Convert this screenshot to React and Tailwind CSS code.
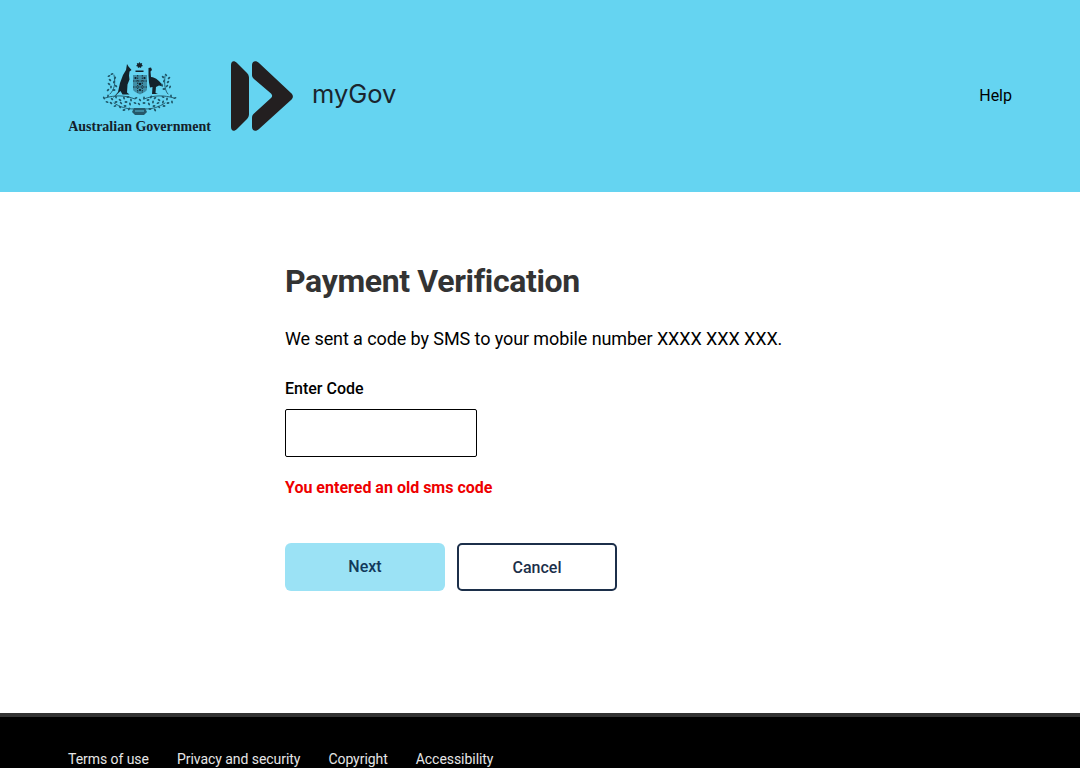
import React from 'react';

// leaves of the wattle, x/y in the crest's own coordinates
const leaves = [
  [7, 15], [10, 13], [13, 17], [8, 19], [12, 21], [7, 23], [14, 25], [9, 26], [12, 29], [6, 29],
  [61, 16], [64, 14], [67, 17], [62, 20], [66, 21], [60, 24], [65, 25], [68, 26], [62, 28],
  [2, 37], [6, 35], [10, 38], [14, 36], [18, 39], [22, 37], [26, 36], [5, 41], [9, 42], [14, 41], [19, 42], [24, 41], [29, 39], [13, 45], [18, 46], [23, 45], [28, 43], [22, 49], [27, 48],
  [73, 37], [69, 35], [65, 38], [61, 36], [57, 39], [53, 37], [49, 36], [70, 41], [66, 42], [61, 41], [56, 42], [51, 41], [46, 39], [62, 45], [57, 46], [52, 45], [47, 43], [53, 49], [48, 48],
  [34, 37], [38, 39], [42, 37], [33, 42], [37, 43], [42, 42],
];

const Crest = () => (
  <svg width="75" height="55" viewBox="0 0 75 55" className="block">
    {/* star */}
    <path d="M37.500 1l1 1.500 1.700-.4-.4 1.700 1.200 1.100-1.700.5-.3 1.700-1.500-.9-1.500.9-.3-1.700-1.700-.5 1.200-1.100-.4-1.700 1.700.4z" fill="#14222b" />
    <path d="M33.500 9.500h8V11h-8z" fill="#14222b" />
    {/* shield */}
    <path d="M31 14h14v14c0 2.500-3.500 3.500-7 5.500-3.500-2-7-3-7-5.500z" fill="#3f8ea6" />
    <path d="M35.700 14v18M40.300 14v18M31 20h14M31 26h14" stroke="#14222b" strokeWidth=".9" strokeDasharray="1.500 1" />
    <circle cx="33.500" cy="17" r="1.100" fill="#0f1d26" />
    <circle cx="38" cy="23" r="1.300" fill="#0f1d26" />
    <circle cx="42.500" cy="17" r="1.100" fill="#0f1d26" />
    <circle cx="38" cy="29" r="1.100" fill="#0f1d26" />
    {/* kangaroo */}
    <path d="M25 3l1.500 2.500L29.500 9l-2 1.500-.5 4 .5 4-2 5-.5 8 2.500 2h-7l-2-3.500L10 38l6-7 2-9 3-8 3-5z" fill="#14222b" />
    {/* emu */}
    <path d="M46.500 7l2.500-.5 1 2.500-1.500 1.500.5 5.500c5 .5 9 4 12 9.500l-4-1-3 1.500-.5 6 2.500 1H50l.5-7-2.500.5-1-5-.5-7z" fill="#14222b" />
    {/* wattle */}
    <g fill="none" stroke="#1e5567" strokeWidth=".9" strokeLinecap="round">
      <path d="M8 33c4-4 6-10 4-19M66 33c-3-3-4-10-3-18M3 37c10-3 20-3 30 1M72 37c-10-3-20-3-30 1M12 42c6 4 12 6 20 6M63 42c-6 4-12 6-20 6" />
    </g>
    <g fill="#1e5567">
      {leaves.map(([x, y]) => (
        <ellipse key={`${x}-${y}`} cx={x} cy={y} rx="1.500" ry=".9" transform={`rotate(${(x * 37 + y * 53) % 180} ${x} ${y})`} />
      ))}
    </g>
    {/* motto */}
    <path d="M32 47h11l2 4-3 3H33l-3-3z" fill="#25586a" />
    <path d="M33 50h9" stroke="#65d4f1" strokeWidth=".8" />
  </svg>
);

const MyGovMark = () => (
  <svg width="63" height="71" viewBox="0 0 63 71" className="block">
    <path d="M0 4C0 0 3-1 6 2l10 10c1.500 2 2 3 2 5v36c0 2-.5 3-2 5L6 68c-3 3-6 2-6-2z" fill="#231f20" />
    <path d="M21 4c0-4 4-5 7-2l32 30c2.500 2 2.500 5 0 7L28 68c-3 3-7 2-7-2v-9c0-2 .5-3 2-4.500L40 37c1.500-1.500 1.500-3 0-4.500L23 18c-1.500-1.500-2-2.500-2-4z" fill="#231f20" />
  </svg>
);

export default function App() {
  return (
    <div className="h-screen overflow-hidden bg-white font-['Roboto',sans-serif] flex flex-col">
      {/* Header */}
      <header className="h-[192px] shrink-0 bg-[#65d4f1] pl-[68px] pr-[68px] pt-[61px] flex justify-between items-start">
        <div className="flex items-start">
          <div className="w-[143px] flex flex-col items-center">
            <Crest />
            <span className="mt-[4px] whitespace-nowrap text-[14px] leading-[14px] font-bold text-[#14222b] font-['Liberation_Serif',serif]">
              Australian Government
            </span>
          </div>
          <div className="ml-[20px]"><MyGovMark /></div>
          <span className="ml-[18px] mt-[15px] text-[25.500px] leading-[36px] text-[#1a252e] font-['Inter',sans-serif]">myGov</span>
        </div>
        <a className="mt-[23px] text-base leading-[24px] text-black">Help</a>
      </header>

      {/* Main */}
      <main className="h-[521px] shrink-0 pl-[285px] pt-[68px]">
        <h1 className="text-[32px] leading-[42px] font-bold text-[#333333] tracking-[-0.35px]">Payment Verification</h1>
        <p className="mt-[23px] text-[18px] leading-[28px] text-black tracking-[-0.09px]">We sent a code by SMS to your mobile number XXXX XXX XXX.</p>
        <label className="block mt-[24px] text-base leading-[24px] font-medium text-black">Enter Code</label>
        <input className="block mt-[8px] w-[192px] h-[48px] rounded-[2px] border border-black bg-white" />
        <p className="mt-[19px] text-base leading-[24px] font-bold text-[#ee0000]">You entered an old sms code</p>
        <div className="mt-[43px] flex gap-3">
          <button className="w-[160px] h-[48px] rounded-[6px] bg-[#9be2f5] text-base font-medium text-[#12395a] pb-px">Next</button>
          <button className="w-[160px] h-[48px] rounded-[5px] border-2 border-[#1c2f4a] bg-white text-base font-medium text-[#1c2f4a] pt-px">Cancel</button>
        </div>
      </main>

      {/* Footer */}
      <footer className="flex-1 bg-black border-t-4 border-[#333333] pl-[68px] pt-[31px]">
        <ul className="flex gap-7 text-sm leading-[22px] tracking-[-0.05px] text-[#e6e6e6]">
          <li>Terms of use</li>
          <li>Privacy and security</li>
          <li>Copyright</li>
          <li>Accessibility</li>
        </ul>
      </footer>
    </div>
  );
}
